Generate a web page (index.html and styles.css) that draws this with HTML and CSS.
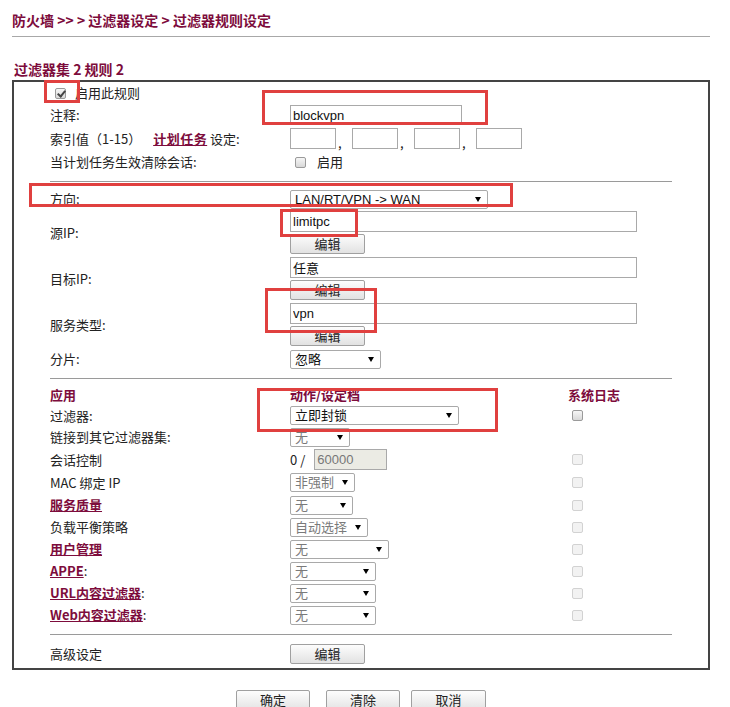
FILE: index.html
```html
<!DOCTYPE html>
<html>
<head>
  <meta charset="utf-8">
  <link rel="stylesheet" href="styles.css">
</head>
<body>
  <div class="page">
    <div class="crumb">防火墙 &gt;&gt; &gt; 过滤器设定 &gt; 过滤器规则设定</div>
    <div class="title">过滤器集 2 规则 2</div>

    <div class="box">
      <!-- basic -->
      <div class="row">
        <label class="wide"><input type="checkbox" class="cb first" checked>启用此规则</label>
      </div>
      <div class="row">
        <span>注释:</span>
        <span><input type="text" class="txt w172" value="blockvpn"></span>
      </div>
      <div class="row h25">
        <span>索引值（1-15）<a href="#" class="lnk sched">计划任务</a> 设定:</span>
        <span class="idx">
          <input type="text" class="txt w46"><span class="comma">,</span>
          <input type="text" class="txt w46"><span class="comma">,</span>
          <input type="text" class="txt w46"><span class="comma">,</span>
          <input type="text" class="txt w46">
        </span>
      </div>
      <div class="row">
        <span>当计划任务生效清除会话:</span>
        <label class="chk"><input type="checkbox" class="cb">启用</label>
      </div>

      <div class="sep"></div>

      <!-- direction / ip -->
      <div class="row">
        <span>方向:</span>
        <span class="dd s198"><select><option>LAN/RT/VPN -&gt; WAN</option></select></span>
      </div>
      <div class="row stack">
        <span>源IP:</span>
        <span class="pair">
          <input type="text" class="txt w347" value="limitpc">
          <button class="btn">编辑</button>
        </span>
      </div>
      <div class="row stack">
        <span>目标IP:</span>
        <span class="pair">
          <input type="text" class="txt w347" value="任意">
          <button class="btn">编辑</button>
        </span>
      </div>
      <div class="row stack">
        <span>服务类型:</span>
        <span class="pair">
          <input type="text" class="txt w347" value="vpn">
          <button class="btn">编辑</button>
        </span>
      </div>
      <div class="row">
        <span>分片:</span>
        <span class="dd s91"><select><option>忽略</option></select></span>
      </div>

      <div class="sep"></div>

      <!-- actions -->
      <div class="row h20 head">
        <span>应用</span>
        <span>动作/设定档</span>
        <span>系统日志</span>
      </div>
      <div class="row h21">
        <span>过滤器:</span>
        <span class="dd s169"><select><option>立即封锁</option></select></span>
        <span class="log"><input type="checkbox" class="cb"></span>
      </div>
      <div class="row">
        <span>链接到其它过滤器集:</span>
        <span class="dd s60 dim"><select><option>无</option></select></span>
      </div>
      <div class="row h23">
        <span>会话控制</span>
        <span class="sess">0 / <input type="text" class="txt w73 ro" value="60000"></span>
        <span class="log"><input type="checkbox" class="cb off"></span>
      </div>
      <div class="row h23">
        <span>MAC 绑定 IP</span>
        <span class="dd s65 dim"><select><option>非强制</option></select></span>
        <span class="log"><input type="checkbox" class="cb off"></span>
      </div>
      <div class="row">
        <span><a href="#" class="lnk">服务质量</a></span>
        <span class="dd s63 dim"><select><option>无</option></select></span>
        <span class="log"><input type="checkbox" class="cb off"></span>
      </div>
      <div class="row">
        <span>负载平衡策略</span>
        <span class="dd s78 dim"><select><option>自动选择</option></select></span>
        <span class="log"><input type="checkbox" class="cb off"></span>
      </div>
      <div class="row">
        <span><a href="#" class="lnk">用户管理</a></span>
        <span class="dd s99 dim"><select><option>无</option></select></span>
        <span class="log"><input type="checkbox" class="cb off"></span>
      </div>
      <div class="row">
        <span><a href="#" class="lnk">APPE</a>:</span>
        <span class="dd s86 dim"><select><option>无</option></select></span>
        <span class="log"><input type="checkbox" class="cb off"></span>
      </div>
      <div class="row">
        <span><a href="#" class="lnk">URL内容过滤器</a>:</span>
        <span class="dd s86 dim"><select><option>无</option></select></span>
        <span class="log"><input type="checkbox" class="cb off"></span>
      </div>
      <div class="row">
        <span><a href="#" class="lnk">Web内容过滤器</a>:</span>
        <span class="dd s86 dim"><select><option>无</option></select></span>
        <span class="log"><input type="checkbox" class="cb off"></span>
      </div>

      <div class="sep last"></div>

      <div class="row">
        <span>高级设定</span>
        <span><button class="btn">编辑</button></span>
      </div>
    </div>

    <div class="actions">
      <button class="btn big">确定</button>
      <button class="btn big mid">清除</button>
      <button class="btn big wider">取消</button>
    </div>

    <!-- red annotation frames -->
    <div class="mark m1"></div>
    <div class="mark m2"></div>
    <div class="mark m3"></div>
    <div class="mark m4"></div>
    <div class="mark m5"></div>
    <div class="mark m6"></div>
  </div>
</body>
</html>
```

FILE: styles.css
```css
body {
  margin: 0;
  background: #fff;
  color: #222;
  font-family: "Noto Sans CJK SC", sans-serif;
  font-size: 13px;
}

* {
  box-sizing: border-box;
}

.page {
  position: relative;
  width: 730px;
  padding: 0 20px 0 12px;
}

.crumb {
  padding: 12px 0 8px;
  line-height: 16px;
  font-size: 14px;
  font-weight: bold;
  color: #7d0c3c;
  border-bottom: 1px solid #a8a8a8;
}

.title {
  margin: 24px 0 3px;
  padding-left: 2px;
  line-height: 16px;
  font-size: 14px;
  font-weight: bold;
  color: #7d0c3c;
}

.box {
  border: 2px solid #444;
  padding: 0 36px 3px;
}

/* rows */
.row {
  display: grid;
  grid-template-columns: 240px 278px 1fr;
  align-items: center;
  height: 22px;
  line-height: 16px;
  white-space: nowrap;
}

.row.h20 { height: 20px; }
.row.h21 { height: 21px; }
.row.h23 { height: 23px; }
.row.h25 { height: 25px; }
.row.stack { height: 46px; }

.wide {
  grid-column: 1 / 3;
  display: flex;
  align-items: center;
}

.head span {
  font-weight: bold;
  color: #7d0c3c;
}

.sep {
  border-top: 1px solid #9a9a9a;
  margin: 8px 0 6px;
}

.sep.last {
  margin-bottom: 8px;
}

.lnk {
  color: #7d0c3c;
  font-weight: bold;
  text-decoration: underline;
}

.sched {
  margin-left: 12px;
  letter-spacing: 0.5px;
}

/* inputs */
.txt {
  height: 21px;
  border: 1px solid #a9a9a9;
  padding: 0 2px;
  font-family: "Liberation Sans", "Noto Sans CJK SC", sans-serif;
  font-size: 13px;
  color: #111;
  background: #fff;
}

.w172 { width: 172px; height: 20px; }
.w46 { width: 46px; }
.w347 { width: 347px; }
.w73 { width: 73px; }

.ro {
  background: #ebebe4;
  color: #777;
}

.idx {
  display: flex;
  align-items: flex-end;
}

.comma {
  width: 16px;
  padding-left: 2px;
  line-height: 12px;
}

.sess {
  display: flex;
  align-items: center;
  gap: 9px;
}

.pair {
  display: flex;
  flex-direction: column;
  align-items: flex-start;
  gap: 2px;
  align-self: start;
  padding-top: 1px;
}

/* selects */
.dd {
  position: relative;
  display: inline-block;
  height: 19px;
}

.dd select {
  appearance: none;
  -webkit-appearance: none;
  width: 100%;
  height: 19px;
  border: 1px solid #a9a9a9;
  border-radius: 2px;
  padding: 0 0 0 4px;
  background: #fff;
  font-family: "Liberation Sans", "Noto Sans CJK SC", sans-serif;
  font-size: 13px;
  color: #111;
}

.dd::after {
  content: "";
  position: absolute;
  right: 7px;
  top: 7px;
  border-left: 3px solid transparent;
  border-right: 3px solid transparent;
  border-top: 5px solid #000;
  pointer-events: none;
}

.dim select {
  color: #7a7a7a;
}

.s198 { width: 198px; }
.s91 { width: 91px; }
.s169 { width: 169px; }
.s60 { width: 60px; }
.s65 { width: 65px; }
.s63 { width: 63px; }
.s78 { width: 78px; }
.s99 { width: 99px; }
.s86 { width: 86px; }

/* checkboxes */
.cb {
  appearance: none;
  -webkit-appearance: none;
  position: relative;
  width: 11px;
  height: 11px;
  margin: 0;
  border: 1px solid #9a9a9a;
  border-radius: 2px;
  background: linear-gradient(#f6f6f6, #d8d8d8);
}

.cb:checked::after {
  content: "";
  position: absolute;
  left: 3px;
  top: 0;
  width: 3px;
  height: 6px;
  border-right: 2px solid #444;
  border-bottom: 2px solid #444;
  transform: rotate(40deg);
}

.cb.first {
  margin: 0 9px 0 5px;
}

.cb.off {
  border-color: #d2d2d2;
  background: #f2f2f2;
}

.chk {
  display: flex;
  align-items: center;
}

.chk .cb {
  margin: 0 11px 0 5px;
}

.log .cb {
  display: block;
  margin-left: 4px;
}

/* buttons */
.btn {
  width: 75px;
  height: 20px;
  padding: 0;
  border: 1px solid #a0a0a0;
  border-radius: 2px;
  background: linear-gradient(#fdfdfd, #e2e2e2);
  font-family: "Noto Sans CJK SC", sans-serif;
  font-size: 13px;
  line-height: 16px;
  color: #222;
}

.actions {
  display: flex;
  justify-content: center;
  margin-top: 20px;
}

.btn.big {
  width: 74px;
  height: 22px;
  padding-bottom: 2px;
  margin-right: 16px;
}

.btn.big.mid {
  margin-right: 11px;
}

.btn.big.wider {
  width: 75px;
  margin-right: 0;
}

/* red frames drawn over the screenshot */
.mark {
  position: absolute;
  border: 3px solid #e0403f;
}

.m1 { left: 44px; top: 80px; width: 36px; height: 23px; }
.m2 { left: 262px; top: 90px; width: 226px; height: 35px; }
.m3 { left: 29px; top: 183px; width: 484px; height: 24px; }
.m4 { left: 280px; top: 209px; width: 78px; height: 28px; }
.m5 { left: 265px; top: 288px; width: 112px; height: 45px; }
.m6 { left: 257px; top: 388px; width: 241px; height: 44px; }
```
